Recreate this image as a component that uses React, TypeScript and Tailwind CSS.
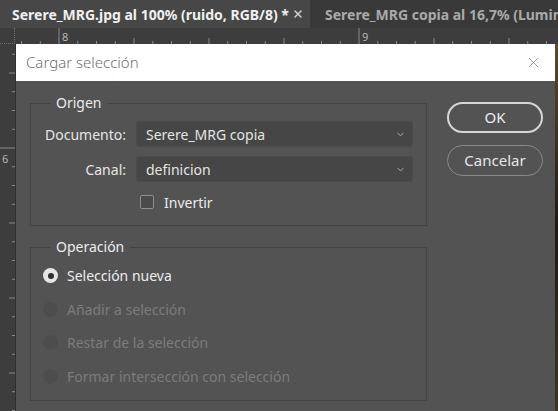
import { X, ChevronDown } from "lucide-react";
import { clsx } from "clsx";

const font = { fontFamily: '"Segoe UI", "Noto Sans", "Open Sans", sans-serif' };

function HRuler() {
  const ticks: JSX.Element[] = [];
  for (let i = -3; i < 30; i++) {
    const x = 59 - 15 + i * 18.75;
    const major = i % 16 === 0;
    const mid = i % 4 === 0;
    const h = major ? 16 : mid ? 6 : 3;
    ticks.push(<line key={i} x1={x} x2={x} y1={16 - h} y2={16} stroke="#8a8a8a" strokeWidth={1} />);
  }
  return (
    <svg width="543" height="16" className="block">
      {ticks}
      <text x="47" y="13" fill="#b5b5b5" fontSize="11" fontFamily="Noto Sans, sans-serif">8</text>
      <text x="347" y="13" fill="#b5b5b5" fontSize="11" fontFamily="Noto Sans, sans-serif">9</text>
    </svg>
  );
}

function VRuler() {
  const ticks: JSX.Element[] = [];
  for (let i = -6; i < 16; i++) {
    const y = 148 - 44 + i * 18.75;
    const major = i === 0;
    const mid = i % 4 === 0;
    const w = major ? 15 : mid ? 6 : 3;
    ticks.push(<line key={i} x1={15 - w} x2={15} y1={y} y2={y} stroke="#8a8a8a" strokeWidth={1} />);
  }
  return (
    <svg width="15" height="367" className="block">
      {ticks}
      <text x="2" y="119" fill="#b5b5b5" fontSize="11" fontFamily="Noto Sans, sans-serif">6</text>
    </svg>
  );
}

function Select({ value }: { value: string }) {
  return (
    <div className="flex h-[26px] w-[277px] items-center justify-between rounded-[3px] border border-[#4a4a4a] bg-[#464646] pl-[9px] pr-[6px] text-[14px] text-[#e4e4e4]">
      <span>{value}</span>
      <ChevronDown className="h-[11px] w-[11px] text-[#b0b0b0]" strokeWidth={2} />
    </div>
  );
}

function Radio({ label, checked, disabled }: { label: string; checked?: boolean; disabled?: boolean }) {
  return (
    <div className="flex h-[33.5px] items-center gap-[9px] pl-[12px]">
      <span
        className={clsx(
          "flex h-[15px] w-[15px] items-center justify-center rounded-full",
          checked ? "bg-[#e6e6e6]" : "bg-[#4d4d4d]",
        )}
      >
        {checked && <span className="h-[6px] w-[6px] rounded-full bg-[#2e2e2e]" />}
      </span>
      <span className={clsx("text-[14px]", disabled ? "text-[#7c7c7c]" : "text-[#ececec]")}>{label}</span>
    </div>
  );
}

export default function App() {
  return (
    <div className="h-[411px] w-[558px] overflow-hidden bg-[#3a3a3a]" style={font}>
      {/* Tabs */}
      <div className="flex h-[28px] items-center overflow-hidden bg-[#393939] text-[14px] font-bold">
        <div className="flex h-full w-[310px] shrink-0 items-center gap-[3px] bg-[#474747] pl-[12px] text-[#f0f0f0]">
          <span className="whitespace-nowrap">Serere_MRG.jpg al 100% (ruido, RGB/8) *</span>
          <X className="h-[12px] w-[12px] text-[#d0d0d0]" strokeWidth={3} />
        </div>
        <div className="whitespace-nowrap pl-[15px] text-[#a9a9a9]">Serere_MRG copia al 16,7% (Luminosidad)</div>
      </div>

      {/* Rulers + canvas */}
      <div className="flex h-[16px] bg-[#3d3d3d]">
        <div className="h-full w-[15px] border-b border-r border-dotted border-[#6e6e6e]" />
        <HRuler />
      </div>
      <div className="flex">
        <div className="w-[15px] bg-[#3d3d3d]">
          <VRuler />
        </div>
        <div className="w-px bg-[#2e2e2e]" />

        {/* Dialog */}
        <div className="flex h-[367px] w-[539px] flex-col bg-[#535353]">
          <div className="flex h-[37px] shrink-0 items-center justify-between bg-white pl-[10px] pr-[13px]">
            <span className="text-[15px] font-light text-[#707070]">Cargar selección</span>
            <X className="h-[17px] w-[17px] text-[#777777]" strokeWidth={1} />
          </div>

          <div className="flex gap-[20px] pl-[14px] pt-[12px]">
            <div className="flex w-[397px] flex-col">
              <fieldset className="border border-[#434343] pb-[12px]">
                <legend className="ml-[19px] px-[6px] text-[14px] leading-[20px] text-[#ececec]">Origen</legend>
                <div className="mt-[8px] flex flex-col gap-[9px]">
                  <div className="flex items-center">
                    <span className="w-[95px] text-right text-[14px] text-[#e6e6e6]">Documento:</span>
                    <div className="ml-[10px]">
                      <Select value="Serere_MRG copia" />
                    </div>
                  </div>
                  <div className="flex items-center">
                    <span className="w-[95px] text-right text-[14px] text-[#e6e6e6]">Canal:</span>
                    <div className="ml-[10px]">
                      <Select value="definicion" />
                    </div>
                  </div>
                  <div className="flex h-[22px] items-center gap-[10px] pl-[109px]">
                    <span className="h-[14px] w-[14px] rounded-[2px] border border-[#8e8e8e] bg-[#4b4b4b]" />
                    <span className="text-[14px] text-[#ececec]">Invertir</span>
                  </div>
                </div>
              </fieldset>

              <fieldset className="mt-[11px] border border-[#434343] pb-[7px]">
                <legend className="ml-[19px] px-[6px] text-[14px] leading-[20px] text-[#ececec]">Operación</legend>
                <div className="mt-[2px] flex flex-col">
                  <Radio label="Selección nueva" checked />
                  <Radio label="Añadir a selección" disabled />
                  <Radio label="Restar de la selección" disabled />
                  <Radio label="Formar intersección con selección" disabled />
                </div>
              </fieldset>
            </div>

            <div className="flex w-[96px] flex-col gap-[12px] pt-[9px]">
              <button className="h-[31px] rounded-full border-2 border-[#d6d6d6] text-[15px] text-[#ececec]">OK</button>
              <button className="h-[31px] rounded-full border border-[#8a8a8a] text-[15px] text-[#e6e6e6]">Cancelar</button>
            </div>
          </div>
        </div>

        {/* Photo behind */}
        <div className="h-[367px] w-[3px] bg-gradient-to-b from-[#5a4d2c] via-[#1e1a12] to-[#3b3522]" />
      </div>
    </div>
  );
}
